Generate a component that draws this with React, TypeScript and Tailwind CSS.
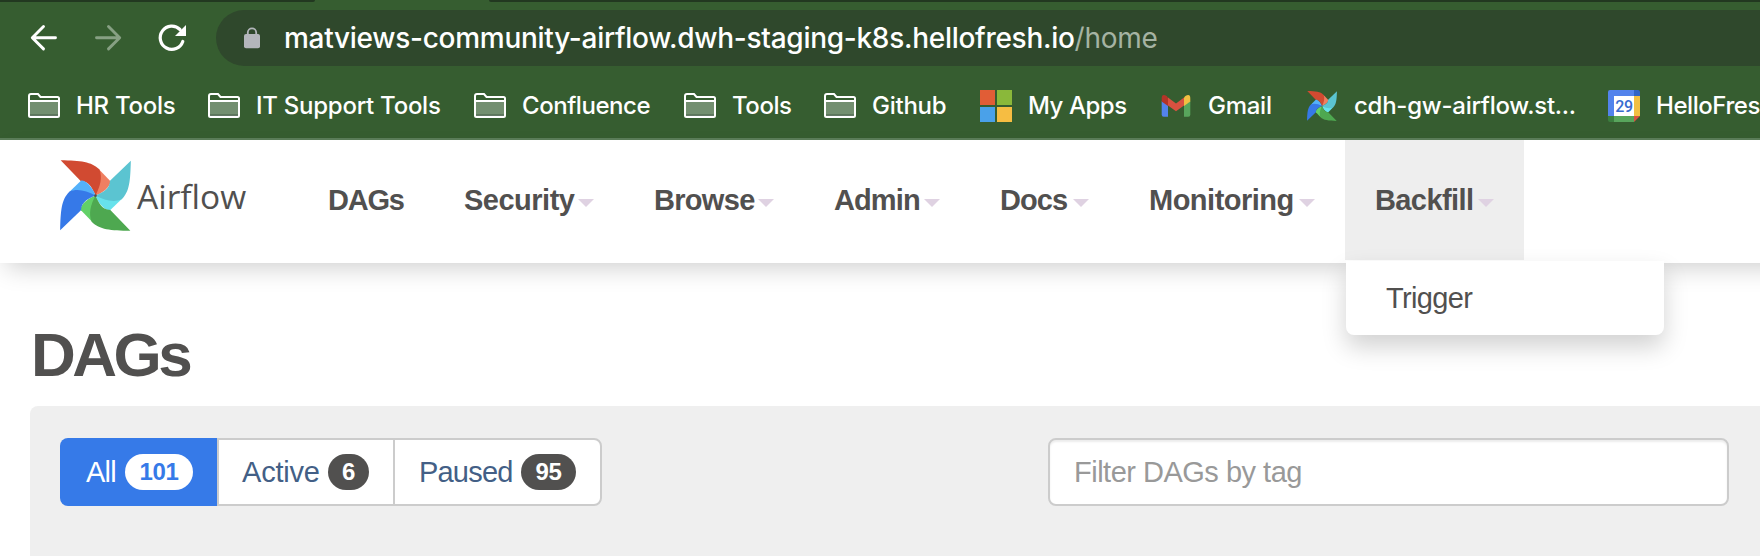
import type { ReactNode } from "react";

const BLADES = [
  { rotate: 0, dark: "#d14a31", light: "#ef7f61" },
  { rotate: 90, dark: "#5bc4d1", light: "#67e2ec" },
  { rotate: 180, dark: "#4ea850", light: "#62d067" },
  { rotate: 270, dark: "#3679e8", light: "#54b1fa" },
];

function Pinwheel({ className }: { className: string }) {
  return (
    <svg viewBox="0 0 213 213" className={className}>
      {BLADES.map((b) => (
        <g key={b.rotate} transform={`rotate(${b.rotate} 106.5 106.5)`}>
          <path d="M116 27L150 62C156 70 138 95 106.5 106.5Z" fill={b.light} />
          <path d="M2 0.5C62 2 94 4 118 28C128 52 121 79 106.5 106.5C98 88 89 64 62 63Z" fill={b.dark} />
        </g>
      ))}
      <circle cx="106.5" cy="107" r="4" fill="#51504f" />
    </svg>
  );
}

function Folder() {
  return (
    <svg viewBox="0 0 32 26" className="h-[26px] w-8">
      <rect x="2" y="8" width="28" height="13.5" fill="#738f70" />
      <rect x="2" y="21.5" width="28" height="2" fill="#647866" />
      <path d="M1 22.5V3Q1 1 3 1H10L12.5 4H29.5Q31 4 31 5.5V22.5Q31 24 29.5 24H2.5Q1 24 1 22.5ZM1 8H31" fill="none" stroke="#fff" strokeWidth="2" />
    </svg>
  );
}

function Microsoft() {
  return (
    <svg viewBox="0 0 32 32" className="size-8">
      <path d="M0 0H15V15H0Z" fill="#e15d36" />
      <path d="M17 0H32V15H17Z" fill="#8ab83a" />
      <path d="M0 17H15V32H0Z" fill="#4aa1e9" />
      <path d="M17 17H32V32H17Z" fill="#f6bd42" />
    </svg>
  );
}

function Gmail() {
  return (
    <svg viewBox="0 0 32 32" className="size-8">
      <path d="M1.7 11L8 15V26.7H3.7Q1.7 26.7 1.7 24.7Z" fill="#5383ec" />
      <path d="M24 15L30.3 11V24.7Q30.3 26.7 28.3 26.7H24Z" fill="#58a55c" />
      <path d="M24 7.5L25.4 6Q30.3 3.2 30.3 8.5V11.5L24 16Z" fill="#f1bf42" />
      <path d="M8 7.5L16 13.5L24 7.5V15.5L16 21.3L8 15.5Z" fill="#d95140" />
      <path d="M8 7.5L6.6 6Q1.7 3.2 1.7 8.5V11.5L8 16Z" fill="#b43428" />
    </svg>
  );
}

function Calendar() {
  return (
    <svg viewBox="0 0 32 32" className="size-8">
      <path d="M2 0H26V6H6V26H0V2Q0 0 2 0Z" fill="#5383ec" />
      <path d="M26 0H30Q32 0 32 2V6H26Z" fill="#3164c6" />
      <path d="M26 6H32V26H26Z" fill="#f1bf42" />
      <path d="M6 26H26V32H6Z" fill="#58a55c" />
      <path d="M0 26H6V32H2Q0 32 0 30Z" fill="#3b7e3f" />
      <path d="M26 26H32L26 32Z" fill="#d95140" />
      <path d="M6 6H26V26H6Z" fill="#fff" />
      <text x="16" y="21.6" textAnchor="middle" fontFamily="Roboto, sans-serif" fontSize="16" fontWeight="500" fill="#3a6bd0">29</text>
    </svg>
  );
}

function Bookmark({ icon, label, className }: { icon: ReactNode; label: string; className: string }) {
  return (
    <div className={`flex shrink-0 items-center gap-4 whitespace-nowrap ${className}`}>
      <div className="flex size-8 shrink-0 items-center justify-center">{icon}</div>
      <span>{label}</span>
    </div>
  );
}

function BrowserChrome() {
  return (
    <div className="h-[140px] overflow-hidden border-b-2 border-[#5c7e5a] bg-[#365d30] font-['Inter',sans-serif] font-medium text-white">
      <div className="flex h-[2px] justify-between">
        <div className="w-[315px] rounded-br-[2px] bg-[#223820]" />
        <div className="w-[1271px] rounded-bl-[2px] bg-[#223820]" />
      </div>
      <div className="flex h-[72px] items-center pb-[8px] pt-[8px]">
        <svg viewBox="0 0 216 56" className="h-14 w-[216px] shrink-0" fill="none" strokeWidth="2.9" strokeLinecap="round" strokeLinejoin="round">
          <path d="M55.5 27.7H33M43.5 16.5L32.3 27.7L43.5 38.9" stroke="#fff" />
          <path d="M96.5 27.7H119M108.5 16.5L119.7 27.7L108.5 38.9" stroke="#87a083" />
          <path d="M182.8 31.5A11.6 11.6 0 1 1 180 19.5" stroke="#fff" strokeWidth="3.2" />
          <path d="M186 15V26H175Z" fill="#fff" />
        </svg>
        <div className="flex h-14 flex-1 items-center rounded-l-[28px] bg-[#2f482c] pl-7">
          <svg viewBox="0 0 16 22" className="h-[22px] w-4">
            <path d="M3.8 8V5.5A4.2 4.2 0 0 1 12.2 5.5V8" fill="none" stroke="#b3b6bb" strokeWidth="1.8" />
            <rect y="7" width="16" height="14.3" rx="2" fill="#b3b6bb" />
          </svg>
          <span className="ml-6 whitespace-nowrap text-[28px] leading-8 tracking-[-0.28px]">
            matviews-community-airflow.dwh-staging-k8s.hellofresh.io<span className="font-normal text-[#a5b3a3]">/home</span>
          </span>
        </div>
      </div>
      <div className="flex h-16 items-center pl-7 text-[24px] leading-8 tracking-[-0.26px]">
        <Bookmark icon={<Folder />} label="HR Tools" className="w-[180px]" />
        <Bookmark icon={<Folder />} label="IT Support Tools" className="w-[266px]" />
        <Bookmark icon={<Folder />} label="Confluence" className="w-[210px] tracking-[-0.45px]" />
        <Bookmark icon={<Folder />} label="Tools" className="w-[140px] tracking-[-0.45px]" />
        <Bookmark icon={<Folder />} label="Github" className="w-[156px]" />
        <Bookmark icon={<Microsoft />} label="My Apps" className="w-[180px] tracking-[-0.45px]" />
        <Bookmark icon={<Gmail />} label="Gmail" className="w-[146px]" />
        <Bookmark icon={<Pinwheel className="size-[30px]" />} label="cdh-gw-airflow.st..." className="w-[302px]" />
        <Bookmark icon={<Calendar />} label="HelloFres" className="w-[152px] tracking-[-0.45px]" />
      </div>
    </div>
  );
}

function NavItem({ label, className, caret = true }: { label: string; className: string; caret?: boolean }) {
  return (
    <div className={`flex h-[120px] shrink-0 items-center justify-between px-[30px] ${className}`}>
      <span className="pt-[2px]">{label}</span>
      {caret && <span className="mt-[6px] border-x-8 border-t-8 border-x-transparent border-t-[#dfd2e2]" />}
    </div>
  );
}

function Navbar() {
  return (
    <nav className="relative z-10 flex h-[123px] w-[1900px] bg-white text-[29px] font-bold shadow-[0_10px_24px_-6px_rgba(0,0,0,0.2)]">
      <div className="flex w-[298px] shrink-0 pl-[60px] pt-5">
        <Pinwheel className="size-[71px] shrink-0" />
        <span className="ml-[6px] mt-[13px] font-['Open_Sans',sans-serif] text-[33.5px] font-normal leading-[46px]">Airflow</span>
      </div>
      <NavItem label="DAGs" caret={false} className="w-[136px] tracking-[-1.2px]" />
      <NavItem label="Security" className="w-[190px] tracking-[-0.5px]" />
      <NavItem label="Browse" className="w-[180px] tracking-[-0.7px]" />
      <NavItem label="Admin" className="w-[166px] tracking-[-0.9px]" />
      <NavItem label="Docs" className="w-[149px] tracking-[-0.9px]" />
      <NavItem label="Monitoring" className="w-[226px] tracking-[-0.5px]" />
      <div className="relative">
        <NavItem label="Backfill" className="w-[179px] bg-[#eeeeee] tracking-[-0.6px]" />
        <div className="absolute left-px top-[121px] flex h-[74px] w-[318px] items-center rounded-b-lg bg-white pl-10 pt-px font-normal tracking-[-0.65px] shadow-[0_12px_24px_rgba(0,0,0,0.18)]">
          Trigger
        </div>
      </div>
    </nav>
  );
}

function Badge({ count, className }: { count: number; className: string }) {
  return (
    <span className={`flex h-9 items-center justify-center rounded-full text-[24px] font-bold leading-none tracking-[-0.3px] ${className}`}>
      {count}
    </span>
  );
}

function DagsPage() {
  return (
    <main className="pl-[30px] pt-[57px]">
      <h2 className="h-[86px] pl-px text-[62px] font-bold leading-[70px] tracking-[-3.5px]">DAGs</h2>
      <div className="flex h-[200px] justify-between rounded-tl-lg bg-[#efefef] pl-[30px] pr-[31px] pt-8 text-[29px]">
        <div className="flex h-[68px] text-[#435f86]">
          <div className="flex w-[157px] items-center justify-between rounded-l-lg bg-[#367ae8] pl-[26px] pr-6 tracking-[-0.8px] text-white">
            <span className="pt-[2px]">All</span>
            <Badge count={101} className="w-[68px] bg-white text-[#367ae8]" />
          </div>
          <div className="flex w-[176px] items-center justify-between border-2 border-r-0 border-[#ccc] bg-white pl-[23px] pr-6 tracking-[-0.2px]">
            <span className="pt-[2px]">Active</span>
            <Badge count={6} className="w-[41px] bg-[#51504f] text-white" />
          </div>
          <div className="flex w-[209px] items-center justify-between rounded-r-lg border-2 border-[#ccc] bg-white pl-6 pr-6 tracking-[-0.8px]">
            <span className="pt-[2px]">Paused</span>
            <Badge count={95} className="w-[55px] bg-[#51504f] text-white" />
          </div>
        </div>
        <div className="flex h-[68px] w-[681px] items-center rounded-lg border-2 border-[#ccc] bg-white pl-6 pt-[2px] tracking-[-0.5px] text-[#999] shadow-[inset_0_2px_2px_rgba(0,0,0,0.075)]">
          Filter DAGs by tag
        </div>
      </div>
    </main>
  );
}

export default function App() {
  return (
    <div className="h-[556px] w-[1760px] overflow-hidden bg-white font-['Liberation_Sans',Arial,sans-serif] text-[#51504f]">
      <BrowserChrome />
      <Navbar />
      <DagsPage />
    </div>
  );
}
